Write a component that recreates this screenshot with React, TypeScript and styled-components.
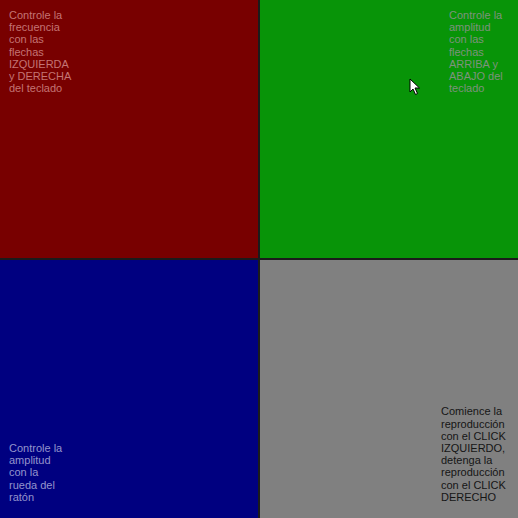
import styled, { createGlobalStyle } from 'styled-components';

const Global = createGlobalStyle`
  html, body {
    margin: 0;
    padding: 0;
    background: #111;
  }
`;

const Board = styled.div`
  width: 518px;
  height: 518px;
  box-sizing: border-box;
  display: grid;
  grid-template-columns: 258px 258px;
  grid-template-rows: 258px 258px;
  gap: 2px;
  background: #1b1b1b;
  font-family: "Liberation Sans", Arial, sans-serif;
  font-size: 11px;
  line-height: 12.2px;
`;

const Quadrant = styled.div<{ $bg: string; $fg: string; $bottom?: boolean; $right?: boolean }>`
  background: ${p => p.$bg};
  color: ${p => p.$fg};
  display: flex;
  flex-direction: column;
  justify-content: ${p => (p.$bottom ? 'flex-end' : 'flex-start')};
  align-items: ${p => (p.$right ? 'flex-end' : 'flex-start')};
  padding: ${p => (p.$bottom ? '0 9px 15px 9px' : '9px 9px 0 9px')};
  box-sizing: border-box;
  position: relative;
`;

const Note = styled.div<{ $width: number; $inset?: number }>`
  width: ${p => p.$width}px;
  margin-right: ${p => p.$inset ?? 0}px;
`;

const Cursor = styled.svg`
  position: absolute;
  left: 149px;
  top: 78px;
`;

export default function App() {
  return (
    <>
      <Global />
      <Board>
        <Quadrant $bg="#780000" $fg="#c47474">
          <Note $width={62}>Controle la frecuencia con las flechas IZQUIERDA y DERECHA del teclado</Note>
        </Quadrant>
        <Quadrant $bg="#089408" $fg="#7d937d" $right>
          <Note $width={58} $inset={2}>
            Controle la amplitud con las flechas ARRIBA y ABAJO del teclado
          </Note>
          <Cursor width="12" height="18" viewBox="0 0 12 18">
            <path d="M1 1 L1 14 L4 11 L6.5 16.5 L8.5 15.5 L6 10 L10.5 10 Z" fill="#fff" stroke="#000" strokeWidth="1" />
          </Cursor>
        </Quadrant>
        <Quadrant $bg="#000080" $fg="#9494cc" $bottom>
          <Note $width={58}>Controle la amplitud con la rueda del ratón</Note>
        </Quadrant>
        <Quadrant $bg="#808080" $fg="#151515" $bottom $right>
          <Note $width={68}>
            Comience la reproducción con el CLICK IZQUIERDO, detenga la reproducción con el CLICK DERECHO
          </Note>
        </Quadrant>
      </Board>
    </>
  );
}
